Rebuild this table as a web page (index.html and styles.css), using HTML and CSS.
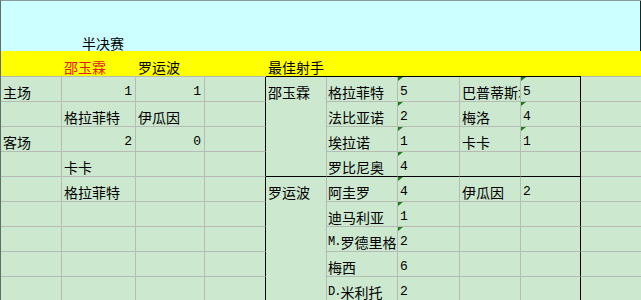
FILE: index.html
```html
<!DOCTYPE html>
<html lang="zh">
<head>
<meta charset="utf-8">
<title>半决赛</title>
<link rel="stylesheet" href="styles.css">
</head>
<body>
<div class="sheet">
  <div class="band"><span class="title">半决赛</span></div>
  <div class="grid">
    <!-- yellow header row -->
    <div class="y"></div>
    <div class="y red">邵玉霖</div>
    <div class="y">罗运波</div>
    <div class="y"></div>
    <div class="y bt">最佳射手</div>
    <div class="y bt"></div>
    <div class="y bt"></div>
    <div class="y bt"></div>
    <div class="y bt"></div>
    <div class="y"></div>

    <!-- merged scorer name cells -->
    <div class="c m m1"><div class="mt">邵玉霖</div></div>
    <div class="c m m2"><div class="mt">罗运波</div></div>

    <!-- r1 -->
    <div class="c">主场</div>
    <div class="c r"><span class="num">1</span></div>
    <div class="c r"><span class="num">1</span></div>
    <div class="c bkr"></div>
    <div class="c f">格拉菲特</div>
    <div class="c tri"><span class="num">5</span></div>
    <div class="c">巴普蒂斯塔</div>
    <div class="c tri bkr"><span class="num">5</span></div>
    <div class="c last"></div>

    <!-- r2 -->
    <div class="c"></div>
    <div class="c">格拉菲特</div>
    <div class="c">伊瓜因</div>
    <div class="c bkr"></div>
    <div class="c f">法比亚诺</div>
    <div class="c tri"><span class="num">2</span></div>
    <div class="c">梅洛</div>
    <div class="c tri bkr"><span class="num">4</span></div>
    <div class="c last"></div>

    <!-- r3 -->
    <div class="c">客场</div>
    <div class="c r"><span class="num">2</span></div>
    <div class="c r"><span class="num">0</span></div>
    <div class="c bkr"></div>
    <div class="c f">埃拉诺</div>
    <div class="c tri"><span class="num">1</span></div>
    <div class="c">卡卡</div>
    <div class="c tri bkr"><span class="num">1</span></div>
    <div class="c last"></div>

    <!-- r4 -->
    <div class="c"></div>
    <div class="c">卡卡</div>
    <div class="c"></div>
    <div class="c bkr"></div>
    <div class="c f bkb">罗比尼奥</div>
    <div class="c tri bkb"><span class="num">4</span></div>
    <div class="c bkb"></div>
    <div class="c bkr bkb"></div>
    <div class="c last"></div>

    <!-- r5 -->
    <div class="c"></div>
    <div class="c">格拉菲特</div>
    <div class="c"></div>
    <div class="c bkr"></div>
    <div class="c f">阿圭罗</div>
    <div class="c tri"><span class="num">4</span></div>
    <div class="c">伊瓜因</div>
    <div class="c bkr"><span class="num">2</span></div>
    <div class="c last"></div>

    <!-- r6 -->
    <div class="c"></div>
    <div class="c"></div>
    <div class="c"></div>
    <div class="c bkr"></div>
    <div class="c f">迪马利亚</div>
    <div class="c tri"><span class="num">1</span></div>
    <div class="c"></div>
    <div class="c bkr"></div>
    <div class="c last"></div>

    <!-- r7 -->
    <div class="c"></div>
    <div class="c"></div>
    <div class="c"></div>
    <div class="c bkr"></div>
    <div class="c f"><span class="num tight">M.</span>罗德里格</div>
    <div class="c tri"><span class="num">2</span></div>
    <div class="c"></div>
    <div class="c bkr"></div>
    <div class="c last"></div>

    <!-- r8 -->
    <div class="c"></div>
    <div class="c"></div>
    <div class="c"></div>
    <div class="c bkr"></div>
    <div class="c f">梅西</div>
    <div class="c"><span class="num">6</span></div>
    <div class="c"></div>
    <div class="c bkr"></div>
    <div class="c last"></div>

    <!-- r9 -->
    <div class="c"></div>
    <div class="c"></div>
    <div class="c"></div>
    <div class="c bkr"></div>
    <div class="c f"><span class="num tight">D.</span>米利托</div>
    <div class="c"><span class="num">2</span></div>
    <div class="c"></div>
    <div class="c bkr"></div>
    <div class="c last"></div>
  </div>
</div>
</body>
</html>
```

FILE: styles.css
```css
html, body {
  margin: 0;
  padding: 0;
  width: 641px;
  height: 300px;
  overflow: hidden;
  background: #cce8cf;
}

body {
  font-family: "Noto Sans CJK SC", "Noto Sans", sans-serif;
  font-size: 14px;
  color: #000;
}

.sheet {
  width: 641px;
  box-sizing: border-box;
  border-top: 1px solid #8c9a9a;
  border-left: 1px solid #5f6f66;
}

.band {
  height: 50px;
  box-sizing: border-box;
  background: #ccffff;
  border-right: 1px solid #222;
  display: flex;
  align-items: flex-end;
  padding-left: 81px;
  line-height: 16px;
}

.grid {
  display: grid;
  grid-template-columns: 61px 74px 69px 61px 61px 71px 62px 61px 60px 60px;
  grid-template-rows: 26px repeat(9, 25px);
}

.y {
  box-sizing: border-box;
  background: #ffff00;
  border-bottom: 1px solid #b4bcb4;
  display: flex;
  align-items: flex-end;
  padding: 0 2px 1px;
  line-height: 16px;
  white-space: nowrap;
}

.y.bt {
  border-bottom-color: #000;
}

.red {
  color: #e0200f;
}

.c {
  box-sizing: border-box;
  position: relative;
  border-right: 1px solid #b4bcb4;
  border-bottom: 1px solid #b4bcb4;
  display: flex;
  align-items: flex-end;
  padding: 0 2px 1px;
  line-height: 16px;
  white-space: nowrap;
  overflow: hidden;
}

.c.f {
  padding-left: 1px;
  padding-right: 0;
}

.c.r {
  justify-content: flex-end;
  padding-right: 3px;
}

.c.bkr {
  border-right-color: #000;
}

.c.bkb {
  border-bottom-color: #000;
}

.c.last {
  border-right: none;
}

.m {
  grid-column: 5;
  align-items: flex-start;
}

.m1 {
  grid-row: 2 / span 4;
  border-bottom-color: #000;
}

.m2 {
  grid-row: 6 / span 5;
}

.mt {
  height: 24px;
  display: flex;
  align-items: flex-end;
  padding-bottom: 1px;
  box-sizing: border-box;
}

.num {
  font-family: "Liberation Mono", "DejaVu Sans Mono", monospace;
  font-size: 13px;
}

.num.tight {
  font-size: 12px;
  letter-spacing: -1px;
}

.tri::before {
  content: "";
  position: absolute;
  top: 0;
  left: 0;
  width: 0;
  height: 0;
  border-top: 4px solid #1e7b1e;
  border-right: 5px solid transparent;
}
```
